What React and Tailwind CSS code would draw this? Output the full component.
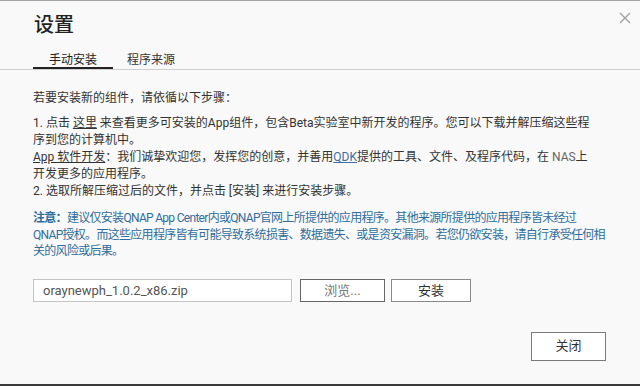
const font = { fontFamily: 'Roboto, "Noto Sans CJK SC", sans-serif' };

function CloseIcon() {
  return (
    <svg width="12" height="12" viewBox="0 0 12 12" className="block">
      <path d="M1 1 L11 11 M11 1 L1 11" stroke="#a0a0a0" strokeWidth="1.4" fill="none" />
    </svg>
  );
}

export default function App() {
  return (
    <div
      className="w-[640px] h-[386px] bg-[#f9f9f9] border-t border-t-[#a3a3a3] border-b-2 border-b-[#3a3a3a] flex flex-col text-[#333]"
      style={font}
    >
      <div className="flex items-start justify-between pl-[34px] pr-[9px] pt-[12px]">
        <h1 className="text-[20px] leading-[24px] text-[#222] font-medium">设置</h1>
        <button className="mt-[-1px] p-0">
          <CloseIcon />
        </button>
      </div>

      <div className="mt-[16px] px-[33px] border-b border-b-[#cfcfcf] flex">
        <div className="w-[80px] text-center text-[12px] leading-[14px] text-[#222] border-b-2 border-b-[#222]">
          手动安装
        </div>
        <div className="w-[76px] text-center text-[12px] leading-[14px] text-[#333] border-b-2 border-b-transparent">
          程序来源
        </div>
      </div>

      <div className="px-[33px] pt-[20px] text-[12px] leading-[17px] whitespace-nowrap">
        <p>若要安装新的组件，请依循以下步骤：</p>
        <p className="mt-[8px]">
          1. 点击 <span className="underline">这里</span> 来查看更多可安装的App组件，包含Beta实验室中新开发的程序。您可以下载并解压缩这些程
          <br />
          序到您的计算机中。
          <br />
          <span className="underline">App 软件开发</span>：我们诚挚欢迎您，发挥您的创意，并善用
          <span className="underline text-[#3d6fa6]">QDK</span>提供的工具、文件、及程序代码，在 <span className="text-[#666]">NAS</span>上
          <br />
          开发更多的应用程序。
          <br />
          2. 选取所解压缩过后的文件，并点击 [安装] 来进行安装步骤。
        </p>
        <p className="mt-[10px] leading-[16.5px] tracking-[-0.7px] text-[#2f6d9e]">
          <span className="font-bold">注意：</span>建议仅安装QNAP App Center内或QNAP官网上所提供的应用程序。其他来源所提供的应用程序皆未经过
          <br />
          QNAP授权。而这些应用程序皆有可能导致系统损害、数据遗失、或是资安漏洞。若您仍欲安装，请自行承受任何相
          <br />
          关的风险或后果。
        </p>

        <div className="mt-[19px] flex items-center">
          <div className="w-[259px] h-[23px] bg-white border border-[#c4c4c4] flex items-center px-[9px] text-[13px] text-[#555]">
            oraynewph_1.0.2_x86.zip
          </div>
          <button className="ml-[8px] w-[85px] h-[23px] bg-white border border-[#666] text-[13px] text-[#777]">
            浏览...
          </button>
          <button className="ml-[6px] w-[80px] h-[23px] bg-white border border-[#8a8a8a] text-[13px] text-[#333]">
            安装
          </button>
        </div>
      </div>

      <div className="flex-1 flex items-start justify-end pr-[34px] pt-[30px]">
        <button className="w-[75px] h-[29px] bg-white border border-[#7a7a7a] text-[13px] text-[#333]">
          关闭
        </button>
      </div>
    </div>
  );
}
